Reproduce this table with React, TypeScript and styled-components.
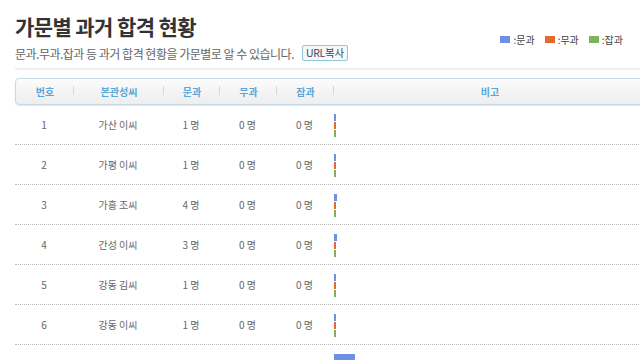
import React from 'react'
import styled, {createGlobalStyle} from 'styled-components'

const GlobalStyle = createGlobalStyle`
  html, body {
    margin: 0;
    padding: 0;
    background: #fff;
    overflow: hidden;
  }
  body {
    font-family: "Noto Sans CJK KR", "Noto Sans", sans-serif;
    color: #555;
  }
`

const Page = styled.div`
  width: 660px;
  padding: 11px 0 0 15px;
  box-sizing: border-box;
`

const TitleRow = styled.div`
  display: flex;
  align-items: flex-end;
  justify-content: space-between;
  width: 608px;
`

const Title = styled.h1`
  margin: 0;
  font-size: 21px;
  font-weight: 700;
  color: #333;
  letter-spacing: -0.6px;
  line-height: 30px;
`

const Legend = styled.div`
  display: flex;
  align-items: center;
  gap: 10px;
  margin-bottom: -6px;
`

const LegendItem = styled.span`
  display: flex;
  align-items: center;
  gap: 3px;
  font-size: 10px;
  color: #444;
`

const Swatch = styled.i<{ color: string }>`
  display: inline-block;
  width: 10px;
  height: 7px;
  background: ${(props) => props.color};
`

const SubRow = styled.div`
  display: flex;
  align-items: center;
  gap: 8px;
  margin-top: 3px;
  height: 18px;
`

const SubText = styled.p`
  margin: 0;
  font-size: 12px;
  color: #666;
  letter-spacing: -0.5px;
`

const CopyButton = styled.button`
  font-family: inherit;
  font-size: 10.5px;
  color: #446;
  background: #f3f9fb;
  border: 1px solid #8fc6d8;
  border-radius: 2px;
  padding: 0 3px;
  height: 16px;
  line-height: 14px;
  letter-spacing: -0.3px;
`

const Divider = styled.div`
  height: 2px;
  background: #eeeeee;
  margin-top: 6px;
`

const Table = styled.div`
  margin-top: 8px;
  width: 630px;
`

const HeaderBar = styled.div`
  display: flex;
  height: 27px;
  align-items: center;
  box-sizing: border-box;
  border: 1px solid #c9d9e4;
  border-radius: 4px;
  background: linear-gradient(#fbfbfb, #eeeeee);
  box-shadow: 0 1px 1px rgba(160, 190, 210, 0.35);
`

const HeadCell = styled.div<{ w: number; last?: boolean }>`
  position: relative;
  width: ${(props) => props.w}px;
  flex: none;
  text-align: center;
  font-size: 10px;
  font-weight: 700;
  color: #5aa6d9;
  &::after {
    content: '';
    display: ${(props) => (props.last ? 'none' : 'block')};
    position: absolute;
    right: 0;
    top: 2px;
    height: 9px;
    border-right: 1px solid #d2d8dc;
  }
`

const Row = styled.div`
  display: flex;
  align-items: center;
  height: 40px;
  border-bottom: 1px dotted #b9b9b9;
  box-sizing: border-box;
`

const Cell = styled.div<{ w: number }>`
  width: ${(props) => props.w}px;
  flex: none;
  text-align: center;
  font-size: 10px;
  color: #666;
`

const NoteCell = styled.div`
  flex: 1;
  display: flex;
  flex-direction: column;
  gap: 1px;
  padding-left: 1px;
  margin-top: 1px;
`

const Bar = styled.span<{ color: string }>`
  display: block;
  height: 7px;
  background: ${(props) => props.color};
`

const cols = [58, 90, 56, 57, 57, 312]
const heads = ['번호', '본관성씨', '문과', '무과', '잡과', '비고']

const colors = {mun: '#6f8fe6', mu: '#e4682f', jap: '#7fb35a'}

const rows = [
  {no: 1, name: '가산 이씨', mun: 1, mu: 0, jap: 0},
  {no: 2, name: '가평 이씨', mun: 1, mu: 0, jap: 0},
  {no: 3, name: '가흥 조씨', mun: 4, mu: 0, jap: 0},
  {no: 4, name: '간성 이씨', mun: 3, mu: 0, jap: 0},
  {no: 5, name: '강동 김씨', mun: 1, mu: 0, jap: 0},
  {no: 6, name: '강동 이씨', mun: 1, mu: 0, jap: 0},
  {no: 7, name: '강릉 김씨', mun: 40, mu: 1, jap: 0},
]

const barWidth = (n: number) => Math.max(1.5, n * 0.5 + 1)

const App = () => (
  <>
    <GlobalStyle/>
    <Page>
      <TitleRow>
        <Title>가문별 과거 합격 현황</Title>
        <Legend>
          <LegendItem><Swatch color={colors.mun}/>:문과</LegendItem>
          <LegendItem><Swatch color={colors.mu}/>:무과</LegendItem>
          <LegendItem><Swatch color={colors.jap}/>:잡과</LegendItem>
        </Legend>
      </TitleRow>
      <SubRow>
        <SubText>문과.무과.잡과 등 과거 합격 현황을 가문별로 알 수 있습니다.</SubText>
        <CopyButton>URL복사</CopyButton>
      </SubRow>
      <Divider/>
      <Table>
        <HeaderBar>
          {heads.map((h, i) => (
            <HeadCell key={h} w={cols[i]} last={i === heads.length - 1}>{h}</HeadCell>
          ))}
        </HeaderBar>
        {rows.map((r) => (
          <Row key={r.no}>
            <Cell w={cols[0]}>{r.no}</Cell>
            <Cell w={cols[1]}>{r.name}</Cell>
            <Cell w={cols[2]}>{r.mun} 명</Cell>
            <Cell w={cols[3]}>{r.mu} 명</Cell>
            <Cell w={cols[4]}>{r.jap} 명</Cell>
            <NoteCell>
              <Bar color={colors.mun} style={{width: barWidth(r.mun)}}/>
              <Bar color={colors.mu} style={{width: barWidth(r.mu)}}/>
              <Bar color={colors.jap} style={{width: barWidth(r.jap)}}/>
            </NoteCell>
          </Row>
        ))}
      </Table>
    </Page>
  </>
)

export default App
